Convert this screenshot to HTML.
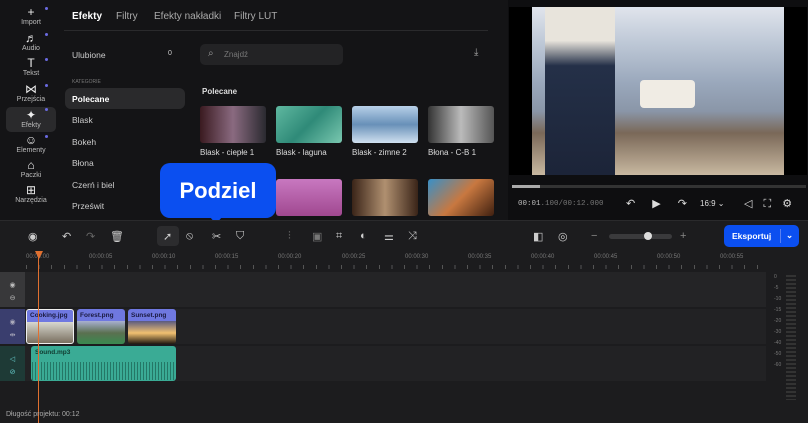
<!DOCTYPE html>
<html><head><meta charset="utf-8"><style>
*{margin:0;padding:0;box-sizing:border-box}
body{width:808px;height:423px;overflow:hidden;background:#141416;font-family:"Liberation Sans",sans-serif;color:#ddd;position:relative}
.a{position:absolute}
.side .it{position:absolute;left:6px;width:50px;height:25px;text-align:center;font-size:7px;color:#bbb}
.side .ic{font-size:12px;color:#eee;line-height:13px;display:block}
.dot{position:absolute;right:8px;top:1px;width:3px;height:3px;border-radius:50%;background:#6a6ae0}
.tab{position:absolute;top:11px;font-size:10px;color:#aaa}
.cat{position:absolute;left:72px;font-size:8.5px;color:#ccc}
.th{position:absolute;width:66px;height:37px;border-radius:3px}
.lab{position:absolute;font-size:8px;color:#ddd}
.tl{position:absolute;top:254px;font-size:6px;color:#777}
.tb{position:absolute;top:230px;font-size:11px;color:#ccc}
</style></head><body>
<div class="a side" style="left:0;top:0;width:58px;height:220px">
<div class="it" style="top:6px"><span class="ic">+</span>Import<i class="dot"></i></div>
<div class="it" style="top:32px"><span class="ic">♬</span>Audio<i class="dot"></i></div>
<div class="it" style="top:57px"><span class="ic">T</span>Tekst<i class="dot"></i></div>
<div class="it" style="top:83px"><span class="ic">⋈</span>Przejścia<i class="dot"></i></div>
<div class="it" style="top:107px;background:#2a2a2c;border-radius:5px;height:25px;padding-top:2px"><span class="ic">✦</span>Efekty<i class="dot"></i></div>
<div class="it" style="top:134px"><span class="ic">☺</span>Elementy<i class="dot"></i></div>
<div class="it" style="top:159px"><span class="ic">⌂</span>Paczki</div>
<div class="it" style="top:184px"><span class="ic">⊞</span>Narzędzia</div>
</div>
<div class="tab" style="left:72px;color:#fff;font-weight:bold">Efekty</div>
<div class="tab" style="left:116px">Filtry</div>
<div class="tab" style="left:154px">Efekty nakładki</div>
<div class="tab" style="left:234px">Filtry LUT</div>
<div class="a" style="left:64px;top:30px;width:424px;height:1px;background:#2a2a2c"></div>
<div class="cat" style="top:50px">Ulubione</div>
<div class="a" style="left:168px;top:50px;font-size:7px;color:#ccc">0</div>
<div class="a" style="left:72px;top:79px;font-size:5px;color:#777">KATEGORIE</div>
<div class="a" style="left:65px;top:88px;width:120px;height:21px;background:#2a2a2c;border-radius:6px"></div>
<div class="cat" style="top:94px;color:#fff;font-weight:bold">Polecane</div>
<div class="cat" style="top:115px">Blask</div>
<div class="cat" style="top:137px">Bokeh</div>
<div class="cat" style="top:158px">Błona</div>
<div class="cat" style="top:180px">Czerń i biel</div>
<div class="cat" style="top:201px">Prześwit</div>
<div class="a" style="left:200px;top:44px;width:143px;height:21px;background:#232325;border-radius:5px;font-size:8px;color:#777;padding:6px 0 0 24px">Znajdź<span class="a" style="left:8px;top:4px;font-size:10px;color:#999">⌕</span></div>
<div class="a" style="left:474px;top:47px;font-size:10px;color:#aaa">⤓</div>
<div class="a" style="left:202px;top:87px;font-size:8px;font-weight:bold;color:#ddd">Polecane</div>
<div class="th" style="left:200px;top:106px;background:linear-gradient(90deg,#3a1a20,#8a6a80,#2a2a30)"></div>
<div class="th" style="left:276px;top:106px;background:linear-gradient(135deg,#5fb8a0,#2f8a78,#7ac8b0)"></div>
<div class="th" style="left:352px;top:106px;background:linear-gradient(180deg,#b8d0e8,#6890b8,#d0e0f0)"></div>
<div class="th" style="left:428px;top:106px;background:linear-gradient(90deg,#333,#bbb,#555)"></div>
<div class="lab" style="left:200px;top:148px">Blask - ciepłe 1</div>
<div class="lab" style="left:276px;top:148px">Blask - laguna</div>
<div class="lab" style="left:352px;top:148px">Blask - zimne 2</div>
<div class="lab" style="left:428px;top:148px">Błona - C-B 1</div>
<div class="th" style="left:276px;top:179px;background:linear-gradient(180deg,#c878c0,#a04890)"></div>
<div class="th" style="left:352px;top:179px;background:linear-gradient(90deg,#3a2418,#b09070,#3a2418)"></div>
<div class="th" style="left:428px;top:179px;background:linear-gradient(135deg,#3890c8,#c87840,#402010)"></div>
<div class="a" style="left:160px;top:163px;width:116px;height:55px;background:#0b4ff0;border-radius:10px;color:#fff;font-size:22px;font-weight:bold;text-align:center;line-height:55px">Podziel</div>
<div class="a" style="left:210px;top:217px;width:0;height:0;border-left:6px solid transparent;border-right:6px solid transparent;border-top:7px solid #0b4ff0"></div>
<!-- preview -->
<div class="a" style="left:508px;top:0;width:300px;height:220px;background:#0e0e10"></div>
<div class="a" style="left:509px;top:7px;width:298px;height:168px;background:#000"></div>
<div class="a" style="left:532px;top:7px;width:252px;height:168px;background:linear-gradient(180deg,#e0e4ec 0%,#c0cad8 20%,#9aa8bc 45%,#8a96a8 62%,#7a6858 75%,#c8b8a0 100%)"></div>
<div class="a" style="left:545px;top:7px;width:70px;height:168px;background:linear-gradient(180deg,#e8e4dc 20%,#243048 35%,#1c2438 100%)"></div>
<div class="a" style="left:640px;top:80px;width:55px;height:28px;background:#f0ece4;border-radius:4px"></div>
<div class="a" style="left:512px;top:185px;width:294px;height:3px;background:#333"></div>
<div class="a" style="left:512px;top:185px;width:28px;height:3px;background:#aaa"></div>
<div class="a" style="left:518px;top:200px;font-family:'Liberation Mono';font-size:7.5px;color:#bbb">00:01<span style="color:#777">.100/00:12.000</span></div>
<div class="a" style="left:626px;top:197px;font-size:11px;color:#ddd;word-spacing:14px">↶ ▶ ↷</div>
<div class="a" style="left:700px;top:199px;font-size:8px;color:#ddd">16:9 ⌄</div>
<div class="a" style="left:744px;top:197px;font-size:11px;color:#ddd;word-spacing:8px">◁ ⛶ ⚙</div>
<!-- timeline -->
<div class="a" style="left:0;top:220px;width:808px;height:203px;background:#1c1c1e"></div>
<div class="a" style="left:0;top:220px;width:808px;height:1px;background:#2a2a2c"></div>
<div class="tb" style="left:28px">◉</div>
<div class="tb" style="left:62px">↶</div><div class="tb" style="left:86px;color:#666">↷</div><div class="tb" style="left:110px">🗑</div>
<div class="a" style="left:157px;top:226px;width:22px;height:20px;background:#2c2c2e;border-radius:4px"></div>
<div class="tb" style="left:163px">➚</div><div class="tb" style="left:186px">⦸</div><div class="tb" style="left:212px">✂</div><div class="tb" style="left:236px">⛉</div>
<div class="tb" style="left:288px;color:#777">⫶</div><div class="tb" style="left:312px;color:#777">▣</div><div class="tb" style="left:336px">⌗</div><div class="tb" style="left:360px">◐</div><div class="tb" style="left:384px">⚌</div><div class="tb" style="left:408px">⤨</div>
<div class="tb" style="left:533px">◧</div><div class="tb" style="left:558px">◎</div>
<div class="tb" style="left:591px;color:#888">−</div>
<div class="a" style="left:609px;top:234px;width:63px;height:5px;background:#3a3a3c;border-radius:3px"></div>
<div class="a" style="left:644px;top:232px;width:8px;height:8px;background:#ddd;border-radius:50%"></div>
<div class="tb" style="left:680px;color:#888">+</div>
<div class="a" style="left:724px;top:225px;width:75px;height:22px;background:#0b4ff0;border-radius:5px;font-size:8.5px;font-weight:bold;color:#fff;padding:6px 0 0 8px">Eksportuj<span style="position:absolute;left:56px;top:4px;width:1px;height:14px;background:#5a80f0"></span><span style="position:absolute;left:62px;top:5px">⌄</span></div>
<div class="tl" style="left:26px">00:00:00</div><div class="tl" style="left:89px">00:00:05</div><div class="tl" style="left:152px">00:00:10</div><div class="tl" style="left:215px">00:00:15</div><div class="tl" style="left:278px">00:00:20</div><div class="tl" style="left:342px">00:00:25</div><div class="tl" style="left:405px">00:00:30</div><div class="tl" style="left:468px">00:00:35</div><div class="tl" style="left:531px">00:00:40</div><div class="tl" style="left:594px">00:00:45</div><div class="tl" style="left:657px">00:00:50</div><div class="tl" style="left:720px">00:00:55</div>
<div class="a" style="left:26px;top:265px;width:740px;height:4px;background:repeating-linear-gradient(90deg,#555 0 1px,transparent 1px 12.6px)"></div>
<div class="a" style="left:0;top:272px;width:766px;height:35px;background:#242426"></div>
<div class="a" style="left:0;top:272px;width:25px;height:35px;background:#38383a;color:#bbb;font-size:7px;text-align:center;padding-top:7px;line-height:13px">◉<br>⊖</div>
<div class="a" style="left:0;top:309px;width:766px;height:35px;background:#222224"></div>
<div class="a" style="left:0;top:309px;width:25px;height:35px;background:#3a3e6e;color:#aab;font-size:7px;text-align:center;padding-top:7px;line-height:13px">◉<br>⇹</div>
<div class="a" style="left:0;top:346px;width:766px;height:35px;background:#222224"></div>
<div class="a" style="left:0;top:346px;width:25px;height:35px;background:#1e3a36;color:#6cc;font-size:7px;text-align:center;padding-top:7px;line-height:13px">◁<br>⊘</div>
<div class="a" style="left:26px;top:309px;width:48px;height:35px;background:linear-gradient(180deg,#6f78e0 0 12px,#d8d8d0 12px,#7a7060);border:1px solid #eee;border-radius:3px"></div>
<div class="a" style="left:77px;top:309px;width:48px;height:35px;background:linear-gradient(180deg,#6f78e0 0 12px,#a8b0d0 12px,#5a7050 24px,#3a8a50);border-radius:3px"></div>
<div class="a" style="left:128px;top:309px;width:48px;height:35px;background:linear-gradient(180deg,#6f78e0 0 12px,#5a5a80 12px,#f0c070 24px,#201810);border-radius:3px"></div>
<div class="a" style="left:30px;top:312px;font-size:6.5px;color:#1a1a40;font-weight:bold">Cooking.jpg</div>
<div class="a" style="left:80px;top:312px;font-size:6.5px;color:#1a1a40;font-weight:bold">Forest.png</div>
<div class="a" style="left:131px;top:312px;font-size:6.5px;color:#1a1a40;font-weight:bold">Sunset.png</div>
<div class="a" style="left:31px;top:346px;width:145px;height:35px;background:#3aab95;border-radius:3px"></div>
<div class="a" style="left:32px;top:362px;width:143px;height:18px;background:repeating-linear-gradient(90deg,#1f6a5a 0 1px,transparent 1px 3px);opacity:.8"></div>
<div class="a" style="left:35px;top:349px;font-size:6.5px;color:#103a30;font-weight:bold">Sound.mp3</div>
<div class="a" style="left:38px;top:252px;width:1px;height:171px;background:#e07030"></div>
<div class="a" style="left:35px;top:251px;width:0;height:0;border-left:4px solid transparent;border-right:4px solid transparent;border-top:8px solid #e07030"></div>
<div class="a" style="left:768px;top:272px;width:40px;height:130px;font-size:5px;color:#777;line-height:11px;padding-left:6px">0<br>-5<br>-10<br>-15<br>-20<br>-30<br>-40<br>-50<br>-60</div>
<div class="a" style="left:786px;top:275px;width:10px;height:125px;background:repeating-linear-gradient(180deg,#333 0 2px,transparent 2px 4px)"></div>
<div class="a" style="left:6px;top:411px;font-size:7px;color:#aaa">Długość projektu: 00:12</div>
</body></html>
